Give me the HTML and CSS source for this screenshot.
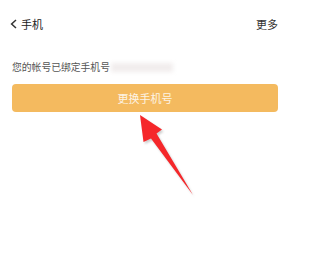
FILE: index.html
```html
<!DOCTYPE html>
<html>
<head>
<meta charset="utf-8">
<link rel="stylesheet" href="styles.css">
</head>
<body>
<div class="page">
  <div class="header">
    <div class="back">
      <svg class="chev" width="7" height="10" viewBox="0 0 7 10"><path d="M6 1 L1.6 5 L6 9" fill="none" stroke="#333" stroke-width="1.5"/></svg>
      <span class="title">手机</span>
    </div>
    <span class="more">更多</span>
  </div>
  <div class="info">
    <span>您的帐号已绑定手机号</span><span class="blur"></span>
  </div>
  <div class="btn">更换手机号</div>
  <svg class="arrow" width="80" height="100" viewBox="0 0 80 100">
    <defs>
      <filter id="sh" x="-20%" y="-20%" width="140%" height="140%">
        <feGaussianBlur stdDeviation="1.2"/>
      </filter>
    </defs>
    <path d="M10 5 L32 19.5 L26.5 23.5 L63 85 L21 28.5 L13.5 32 Z" fill="#777" opacity="0.35" filter="url(#sh)" transform="translate(1.5,2)"/>
    <path d="M10 5 L32 19.5 L26.5 23.5 L63 85 L21 28.5 L13.5 32 Z" fill="#f5272a"/>
  </svg>
</div>
</body>
</html>
```
FILE: styles.css
```css
html, body {
  margin: 0;
  padding: 0;
  background: #fff;
}
body {
  font-family: "Noto Sans CJK SC", "Noto Sans", sans-serif;
  width: 297px;
  height: 262px;
  overflow: hidden;
}
.page {
  position: relative;
  height: 262px;
}
.header {
  height: 48px;
  display: flex;
  align-items: center;
  justify-content: space-between;
  padding: 0 19px 0 10px;
}
.back {
  display: flex;
  align-items: center;
  gap: 4px;
}
.chev {
  display: block;
}
.title {
  font-size: 11px;
  color: #222;
  line-height: 14px;
}
.more {
  font-size: 11px;
  color: #333;
  line-height: 14px;
}
.info {
  margin-top: 12px;
  padding-left: 12px;
  display: flex;
  align-items: center;
  height: 14px;
  font-size: 9.8px;
  color: #555;
}
.blur {
  width: 62px;
  height: 9px;
  background: #f1eded;
  filter: blur(2px);
  margin-left: 1px;
}
.btn {
  margin: 10px 19px 0 12px;
  height: 28px;
  border-radius: 4px;
  background: #f4ba5f;
  color: #fdf4e6;
  font-size: 11px;
  display: flex;
  align-items: center;
  justify-content: center;
}
.arrow {
  position: absolute;
  left: 130px;
  top: 110px;
}
```
